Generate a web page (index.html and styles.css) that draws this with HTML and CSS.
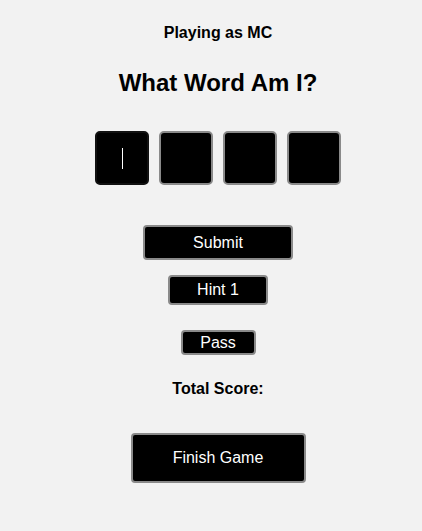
FILE: index.html
```html
<!DOCTYPE html>
<html>
<head>
<meta charset="utf-8">
<link rel="stylesheet" href="styles.css">
</head>
<body>
<main class="game">
  <p class="player">Playing as MC</p>
  <h1 class="title">What Word Am I?</h1>
  <div class="letters">
    <div class="letter focused"><span class="caret"></span></div>
    <div class="letter"></div>
    <div class="letter"></div>
    <div class="letter"></div>
  </div>
  <button class="btn submit">Submit</button>
  <button class="btn hint">Hint 1</button>
  <button class="btn pass">Pass</button>
  <p class="score">Total Score:</p>
  <button class="btn finish">Finish Game</button>
</main>
</body>
</html>
```
FILE: styles.css
```css
html, body {
  margin: 0;
  padding: 0;
  background: #f2f2f2;
}
body {
  font-family: "Liberation Sans", Arial, sans-serif;
  color: #000;
}
.game {
  display: flex;
  flex-direction: column;
  align-items: center;
  padding-left: 14px;
  padding-top: 24px;
}
.player {
  margin: 0;
  font-size: 16px;
  line-height: 18px;
  font-weight: bold;
}
.title {
  margin: 27px 0 0;
  font-size: 24px;
  line-height: 28px;
  font-weight: bold;
}
.letters {
  display: flex;
  gap: 10px;
  margin-top: 34px;
}
.letter {
  box-sizing: border-box;
  width: 54px;
  height: 54px;
  background: #000;
  border: 2px solid #8a8a8a;
  border-radius: 5px;
  display: flex;
  align-items: center;
  justify-content: center;
}
.letter.focused {
  border-color: #111;
}
.caret {
  width: 1px;
  height: 21px;
  background: #fff;
}
.btn {
  box-sizing: border-box;
  background: #000;
  color: #fff;
  border: 2px solid #8a8a8a;
  border-radius: 4px;
  font-family: "Liberation Sans", Arial, sans-serif;
  font-size: 16px;
  padding: 0;
  display: flex;
  align-items: center;
  justify-content: center;
}
.submit {
  width: 150px;
  height: 35px;
  margin-top: 40px;
}
.hint {
  width: 100px;
  height: 30px;
  margin-top: 15px;
}
.pass {
  width: 75px;
  height: 25px;
  margin-top: 25px;
}
.score {
  margin: 25px 0 0;
  font-size: 16px;
  line-height: 18px;
  font-weight: bold;
}
.finish {
  width: 175px;
  height: 50px;
  margin-top: 35px;
}
```
